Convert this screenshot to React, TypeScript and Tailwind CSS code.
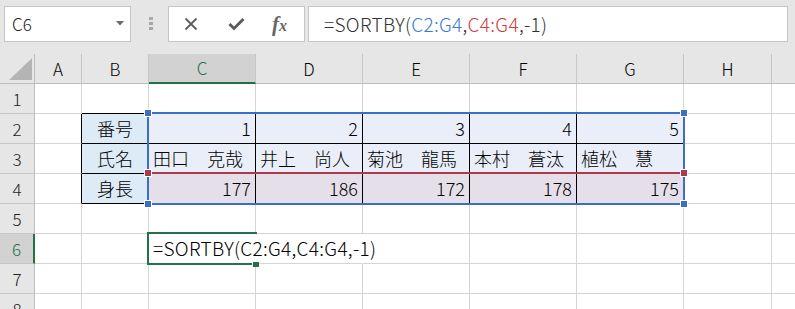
import React from "react";

const colW = ["w-[47px]", "w-[67px]", "w-[107px]", "w-[107px]", "w-[107px]", "w-[107px]", "w-[107px]", "w-[88px]"];
const letters = ["A", "B", "C", "D", "E", "F", "G", "H"];
const F = "font-['Noto_Sans_CJK_JP',sans-serif]";

type CellContent = { text: string; align: "l" | "r" | "c" };

const data: Record<number, Record<number, CellContent>> = {
  2: {
    1: { text: "番号", align: "c" },
    2: { text: "1", align: "r" },
    3: { text: "2", align: "r" },
    4: { text: "3", align: "r" },
    5: { text: "4", align: "r" },
    6: { text: "5", align: "r" },
  },
  3: {
    1: { text: "氏名", align: "c" },
    2: { text: "田口　克哉", align: "l" },
    3: { text: "井上　尚人", align: "l" },
    4: { text: "菊池　龍馬", align: "l" },
    5: { text: "本村　蒼汰", align: "l" },
    6: { text: "植松　慧", align: "l" },
  },
  4: {
    1: { text: "身長", align: "c" },
    2: { text: "177", align: "r" },
    3: { text: "186", align: "r" },
    4: { text: "172", align: "r" },
    5: { text: "178", align: "r" },
    6: { text: "175", align: "r" },
  },
};

function cellClasses(r: number, c: number) {
  const rightBlack = r >= 2 && r <= 4 && c >= 0 && c <= 6;
  const rightWhite = r === 6 && (c === 2 || c === 3);
  const bottomBlack = r >= 1 && r <= 4 && c >= 1 && c <= 6;
  const rc = rightBlack ? "border-r-black" : rightWhite ? "border-r-white" : "border-r-[#d4d4d4]";
  const bc = bottomBlack ? "border-b-black" : "border-b-[#d4d4d4]";
  let bg = "";
  if ((r === 2 || r === 3) && c >= 2 && c <= 6) bg = "bg-[#e9eef8]";
  else if (r === 4 && c >= 2 && c <= 6) bg = "bg-[#e5dfe9]";
  else if (c === 1 && r >= 2 && r <= 4) bg = "bg-[#ddebf7]";
  return `${rc} ${bc} ${bg}`;
}

function Handle({ cls }: { cls: string }) {
  return <div className={`absolute w-[8px] h-[8px] border border-white ${cls}`} />;
}

export default function App() {
  const rows = [1, 2, 3, 4, 5, 6, 7, 8];
  return (
    <div className={`relative w-[795px] h-[309px] overflow-hidden bg-white font-light ${F}`}>
      {/* Toolbar */}
      <div className="flex h-[54px] bg-[#e6e6e6] pt-[6px]">
        <div className="ml-[4px] flex h-[36px] w-[127px] items-center justify-between border border-[#c6c6c6] bg-white pl-[7px] pr-[6px]">
          <span className="text-[17px] text-[#222]">C6</span>
          <svg width="8" height="5" viewBox="0 0 8 5" className="mb-[1px]">
            <path d="M0 0 L8 0 L4 4.5 Z" fill="#6b6b6b" />
          </svg>
        </div>
        <div className="ml-[17px] flex w-[5px] flex-col items-center gap-[2px] pt-[11px]">
          <div className="h-[3px] w-[4px] bg-[#a8a8a8]" />
          <div className="h-[3px] w-[4px] bg-[#a8a8a8]" />
          <div className="h-[3px] w-[4px] bg-[#a8a8a8]" />
        </div>
        <div className="ml-[15px] flex h-[36px] w-[137px] items-center border border-[#c6c6c6] bg-white">
          <svg width="14" height="14" viewBox="0 0 14 14" className="ml-[15px]">
            <path d="M1.5 1.5 L12.5 12.5 M12.5 1.5 L1.5 12.5" stroke="#5c5c5c" strokeWidth="1.8" />
          </svg>
          <svg width="17" height="14" viewBox="0 0 17 14" className="ml-[30px]">
            <path d="M1.5 7 L6 11.5 L15.5 2" stroke="#5c5c5c" strokeWidth="3" fill="none" />
          </svg>
          <span className="ml-[27px] font-['Liberation_Serif',serif] italic text-[#666] leading-none">
            <span className="text-[21px] font-bold">f</span>
            <span className="text-[16px] font-bold">x</span>
          </span>
        </div>
        <div className="ml-[3px] flex h-[36px] w-[480px] items-center border border-[#c6c6c6] bg-white pl-[15px] text-[19px] tracking-[0.3px] text-[#333] whitespace-nowrap">
          <span>=SORTBY(</span>
          <span className="text-[#3a7bd5]">C2:G4</span>
          <span>,</span>
          <span className="text-[#d13b3b]">C4:G4</span>
          <span>,-1)</span>
        </div>
      </div>

      {/* Column header */}
      <div className="flex h-[30px] bg-[#e6e6e6]">
        <div className="relative w-[35px] shrink-0 border-r border-b border-r-[#bdbdbd] border-b-[#bdbdbd]">
          <svg width="23" height="22" viewBox="0 0 23 22" className="absolute left-[9px] top-[4px]">
            <path d="M23 0 L23 22 L0 22 Z" fill="#b4b4b4" />
          </svg>
        </div>
        {letters.map((l, i) =>
          i === 2 ? (
            <div
              key={l}
              className={`${colW[i]} shrink-0 flex items-center justify-center border-r border-b-2 border-r-[#c6c6c6] border-b-[#217346] bg-[#d2d2d2] text-[17px] text-[#217346]`}
            >
              {l}
            </div>
          ) : (
            <div
              key={l}
              className={`${colW[i]} shrink-0 flex items-center justify-center border-r border-b border-r-[#c6c6c6] border-b-[#bdbdbd] text-[17px] text-black`}
            >
              {l}
            </div>
          )
        )}
        <div className="flex-1 border-b border-b-[#bdbdbd]" />
      </div>

      {/* Rows */}
      {rows.map((r) => (
        <div key={r} className="flex h-[30px]">
          {r === 6 ? (
            <div className="w-[35px] shrink-0 flex items-center justify-center border-r-2 border-b border-r-[#217346] border-b-[#c6c6c6] bg-[#d2d2d2] text-[17px] text-[#217346]">
              {r}
            </div>
          ) : (
            <div className="w-[35px] shrink-0 flex items-center justify-center border-r border-b border-r-[#bdbdbd] border-b-[#c6c6c6] bg-[#e6e6e6] text-[17px] text-[#222]">
              {r}
            </div>
          )}
          {letters.map((l, c) => {
            const content = data[r]?.[c];
            const align =
              content?.align === "r" ? "justify-end pr-[4px]" : content?.align === "c" ? "justify-center" : "justify-start pl-[4px]";
            return (
              <div
                key={l}
                className={`${colW[c]} shrink-0 flex items-center border-r border-b ${cellClasses(r, c)} ${align} text-[18px] text-black whitespace-nowrap`}
              >
                {content?.text}
                {r === 6 && c === 2 && (
                  <span className="relative z-10 text-[19px] tracking-[0.3px]">=SORTBY(C2:G4,C4:G4,-1)</span>
                )}
              </div>
            );
          })}
          <div className="flex-1 border-b border-b-[#d4d4d4]" />
        </div>
      ))}

      {/* Blue reference range C2:G4 */}
      <div className="absolute left-[147px] top-[112px] h-[93px] w-[538px] border-2 border-[#3c6fc4]" />
      {/* Red reference range top edge C4:G4 */}
      <div className="absolute left-[149px] top-[172px] h-[2px] w-[534px] bg-[#ad3a4b]" />
      <Handle cls="left-[144px] top-[109px] bg-[#3c6fc4]" />
      <Handle cls="left-[680px] top-[109px] bg-[#3c6fc4]" />
      <Handle cls="left-[144px] top-[169px] bg-[#ad3a4b]" />
      <Handle cls="left-[680px] top-[169px] bg-[#ad3a4b]" />
      <Handle cls="left-[144px] top-[200px] bg-[#3c6fc4]" />
      <Handle cls="left-[680px] top-[200px] bg-[#3c6fc4]" />

      {/* Active cell C6 */}
      <div className="absolute left-[147px] top-[232px] h-[33px] w-[110px] border-t-2 border-l-2 border-b-2 border-[#217346]" />
      <div className="absolute left-[252px] top-[261px] h-[6px] w-[7px] border-l border-t border-white bg-[#217346]" />
    </div>
  );
}
